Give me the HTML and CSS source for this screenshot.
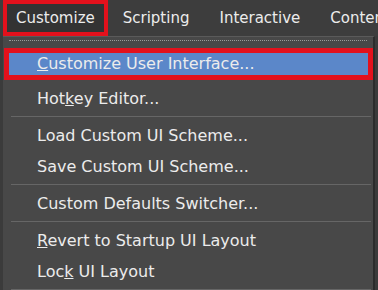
FILE: index.html
```html
<!DOCTYPE html>
<html lang="en">
<head>
    <meta charset="UTF-8">
    <title>Customize menu</title>
    <link rel="stylesheet" href="styles.css">
</head>
<body>
    <div class="menubar">
        <div class="top-item active"><span>Customize</span></div>
        <div class="top-item">Scripting</div>
        <div class="top-item">Interactive</div>
        <div class="top-item">Content</div>
    </div>
    <div class="dropdown">
        <div class="dots"></div>
        <div class="item selected"><span><u>C</u>ustomize User Interface...</span></div>
        <div class="item">Hot<u>k</u>ey Editor...</div>
        <div class="sep"></div>
        <div class="item">Load Custom UI Scheme...</div>
        <div class="item">Save Custom UI Scheme...</div>
        <div class="sep"></div>
        <div class="item">Custom Defaults Switcher...</div>
        <div class="sep"></div>
        <div class="item"><u>R</u>evert to Startup UI Layout</div>
        <div class="item">Loc<u>k</u> UI Layout</div>
        <div class="sep"></div>
    </div>
</body>
</html>
```

FILE: styles.css
```css
body {
    margin: 0;
    background: #3b3b3b;
    font-family: "DejaVu Sans", sans-serif;
    font-size: 15px;
    color: #ececec;
    overflow: hidden;
}
.menubar {
    display: flex;
    height: 36px;
    padding-left: 3px;
    background: #3d3d3d;
    white-space: nowrap;
    overflow: hidden;
}
.top-item {
    padding: 0 15px;
    line-height: 36px;
}
.top-item.active {
    border: 4px solid #e3111c;
    padding: 0;
    line-height: 28px;
}
.top-item.active span {
    display: block;
    background: #333333;
    padding: 0 9px;
}
.dropdown {
    margin-left: 3px;
    width: 370px;
    background: #484848;
    border-top: 1px solid #5a5a5a;
    border-right: 2px solid #2c2c2c;
    font-size: 16px;
}
.dots {
    height: 2px;
    margin: 3px 6px 5px 6px;
    border-top: 1px dotted #9a9a9a;
}
.item {
    height: 31px;
    line-height: 31px;
    padding-left: 34px;
    white-space: nowrap;
}
.item.selected {
    border: 5px solid #e3111c;
    height: 22px;
    line-height: 22px;
    padding-left: 0;
    margin: 0 0 3px 1px;
}
.item.selected span {
    display: block;
    background: #5b87c9;
    padding-left: 28px;
}
.sep {
    height: 1px;
    margin: 2px 2px 3px 8px;
    background: #666666;
}
```
